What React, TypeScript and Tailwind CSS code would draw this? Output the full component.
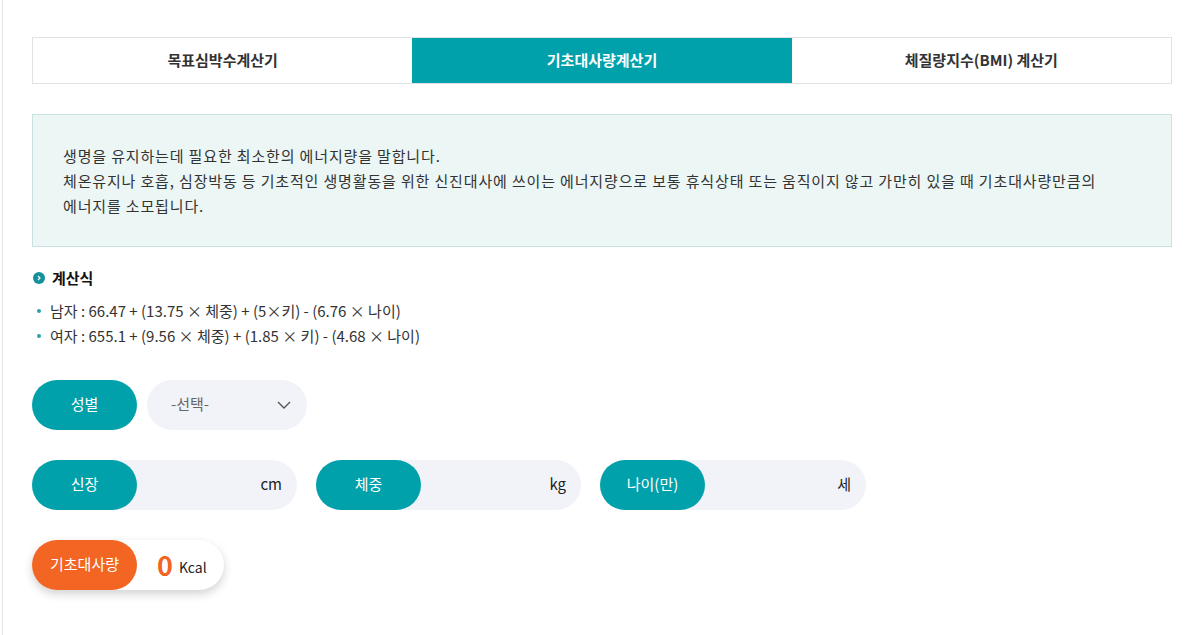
import { useState } from "react";

const tabs = ["목표심박수계산기", "기초대사량계산기", "체질량지수(BMI) 계산기"];

const fontStack = {
  fontFamily: '"Noto Sans CJK KR", "Noto Sans", sans-serif',
};

function InputField({ label, unit, width }: { label: string; unit: string; width: string }) {
  return (
    <div className={`flex h-[50px] ${width} items-center rounded-full bg-[#f1f3f8]`}>
      <span className="flex h-full w-[105px] shrink-0 items-center justify-center rounded-full bg-[#00a1ab] text-[15px] text-white">
        {label}
      </span>
      <input className="h-full min-w-0 flex-1 bg-transparent px-3 text-right text-[14px] outline-none" />
      <span className="pr-[15px] text-[15px] text-[#222]">{unit}</span>
    </div>
  );
}

export default function App() {
  const [active] = useState(1);

  return (
    <div className="min-h-[635px] bg-white" style={fontStack}>
      <div className="ml-[2px] min-h-[635px] border-l border-[#e4e4e4] pl-[29px] pr-[27px] pt-[37px]">
        {/* tabs */}
        <div className="grid grid-cols-3 border border-[#e2e2e2]">
          {tabs.map((tab, index) => (
            <button
              key={tab}
              type="button"
              className={
                index === active
                  ? "h-[45px] bg-[#00a1ab] text-[15px] font-bold text-white"
                  : "h-[45px] bg-white text-[15px] font-bold text-[#333]"
              }
            >
              {tab}
            </button>
          ))}
        </div>

        {/* description */}
        <div className="mt-[30px] border border-[#c9e2e3] bg-[#ebf6f5] px-[30px] py-[28px] text-[15px] leading-[25px] tracking-[0.85px] text-[#333]">
          <p>생명을 유지하는데 필요한 최소한의 에너지량을 말합니다.</p>
          <p>
            체온유지나 호흡, 심장박동 등 기초적인 생명활동을 위한 신진대사에 쓰이는 에너지량으로 보통 휴식상태 또는 움직이지 않고 가만히 있을 때 기초대사량만큼의
            <br />
            에너지를 소모됩니다.
          </p>
        </div>

        {/* formula */}
        <div className="mt-[20px] pl-[1px]">
          <h3 className="flex items-center gap-[7px] text-[15px] font-bold text-[#111]">
            <span className="flex h-[12px] w-[12px] items-center justify-center rounded-full bg-[#13909c]">
              <svg width="6" height="6" viewBox="0 0 6 6" fill="none">
                <path d="M2 1l2 2-2 2" stroke="white" strokeWidth="1.2" />
              </svg>
            </span>
            계산식
          </h3>
          <ul className="mt-[10px] space-y-[3px] text-[15px] leading-[22px] text-[#333]">
            <li className="flex items-center gap-[9px] pl-[4px]">
              <span className="h-[4px] w-[4px] rounded-full bg-[#2aa3ad]" />
              남자 : 66.47 + (13.75 × 체중) + (5×키) - (6.76 × 나이)
            </li>
            <li className="flex items-center gap-[9px] pl-[4px]">
              <span className="h-[4px] w-[4px] rounded-full bg-[#2aa3ad]" />
              여자 : 655.1 + (9.56 × 체중) + (1.85 × 키) - (4.68 × 나이)
            </li>
          </ul>
        </div>

        {/* gender */}
        <div className="mt-[33px] flex items-center gap-[10px]">
          <span className="flex h-[50px] w-[105px] items-center justify-center rounded-full bg-[#00a1ab] text-[15px] text-white">
            성별
          </span>
          <div className="flex h-[50px] w-[160px] items-center justify-between rounded-full bg-[#f1f3f8] pl-[24px] pr-[16px] text-[15px] text-[#666]">
            <span>-선택-</span>
            <svg width="14" height="8" viewBox="0 0 14 8" fill="none">
              <path d="M1 1l6 6 6-6" stroke="#555" strokeWidth="1.4" />
            </svg>
          </div>
        </div>

        {/* measurements */}
        <div className="mt-[30px] flex items-center gap-[19px]">
          <InputField label="신장" unit="cm" width="w-[265px]" />
          <InputField label="체중" unit="kg" width="w-[265px]" />
          <InputField label="나이(만)" unit="세" width="w-[266px]" />
        </div>

        {/* result */}
        <div className="mt-[30px] flex h-[50px] w-[192px] items-center rounded-full bg-white shadow-[0_4px_10px_rgba(0,0,0,0.18)]">
          <span className="flex h-full w-[105px] items-center justify-center rounded-full bg-[#f26522] text-[15px] text-white">
            기초대사량
          </span>
          <span className="ml-[20px] text-[27px] font-bold leading-none text-[#f26522]">0</span>
          <span className="ml-[6px] mt-[6px] text-[14px] text-[#222]">Kcal</span>
        </div>
      </div>
    </div>
  );
}
